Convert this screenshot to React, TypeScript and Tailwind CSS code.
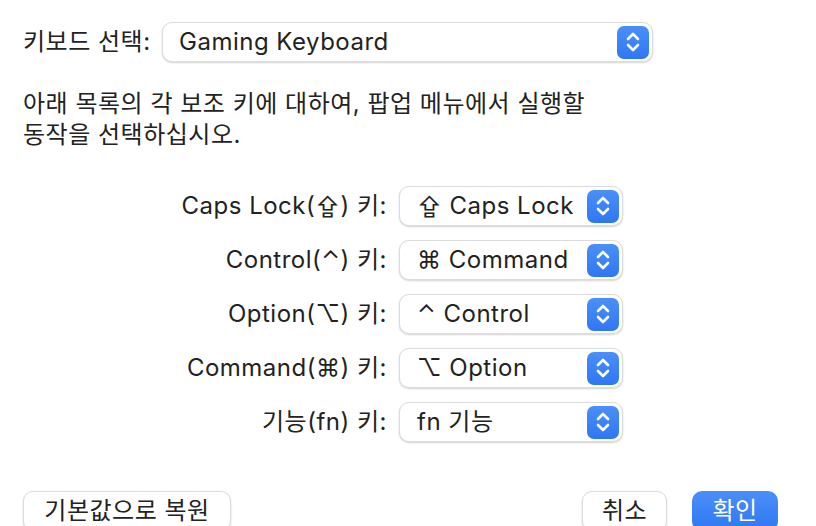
import React from "react";

const font = { fontFamily: 'Inter, "Noto Sans CJK KR", "DejaVu Sans", sans-serif' };

const rows = [
  { label: "Caps Lock(⇪) 키:", value: "⇪ Caps Lock" },
  { label: "Control(⌃) 키:", value: "⌘ Command" },
  { label: "Option(⌥) 키:", value: "⌃ Control" },
  { label: "Command(⌘) 키:", value: "⌥ Option" },
  { label: "기능(fn) 키:", value: "fn 기능" },
];

function Stepper() {
  return (
    <div className="w-[32px] h-[33px] rounded-[7px] bg-gradient-to-b from-[#4a8ff9] to-[#2f77f2] flex items-center justify-center">
      <svg width="16" height="22" viewBox="0 0 16 22" fill="none" stroke="white" strokeWidth="2.6" strokeLinecap="round" strokeLinejoin="round">
        <path d="M3 8 L8 3 L13 8" />
        <path d="M3 14 L8 19 L13 14" />
      </svg>
    </div>
  );
}

function Popup({ value, className }: { value: string; className: string }) {
  return (
    <div className={"h-[40px] rounded-[10px] bg-white border border-[#dcdcdc] shadow-[0_1px_2px_rgba(0,0,0,0.18)] flex items-center justify-between pr-[3px] " + className}>
      <span className="text-[24px] tracking-[0.5px] text-[#222] whitespace-pre">{value}</span>
      <Stepper />
    </div>
  );
}

export default function App() {
  return (
    <div className="w-[816px] h-[526px] bg-white overflow-hidden text-[#222] tracking-[0.5px]" style={font}>
      <div className="flex items-center pl-[23px] pt-[22px]">
        <span className="text-[24px] w-[139px]">키보드 선택:</span>
        <Popup value="Gaming Keyboard" className="w-[491px] pl-[16px]" />
      </div>

      <p className="pl-[23px] mt-[26px] text-[24px] leading-[31px]">
        아래 목록의 각 보조 키에 대하여, 팝업 메뉴에서 실행할
        <br />
        동작을 선택하십시오.
      </p>

      <div className="flex flex-col gap-[14px] mt-[36px] pl-[23px]">
        {rows.map((r) => (
          <div key={r.label} className="flex items-center gap-[12px]">
            <span className="w-[364px] text-right text-[24px]">{r.label}</span>
            <Popup value={r.value} className="w-[224px] pl-[17px]" />
          </div>
        ))}
      </div>

      <div className="flex items-start mt-[49px] pl-[23px] pr-[38px]">
        <button className="w-[208px] h-[40px] rounded-[10px] bg-white border border-[#dcdcdc] shadow-[0_1px_2px_rgba(0,0,0,0.18)] text-[24px] text-[#222]">
          기본값으로 복원
        </button>
        <div className="flex-1" />
        <button className="w-[85px] h-[40px] rounded-[10px] bg-white border border-[#dcdcdc] shadow-[0_1px_2px_rgba(0,0,0,0.18)] text-[24px] text-[#222]">
          취소
        </button>
        <button className="ml-[25px] w-[86px] h-[40px] rounded-[10px] bg-gradient-to-b from-[#4a8ff9] to-[#2f77f2] text-[24px] text-white">
          확인
        </button>
      </div>
    </div>
  );
}
